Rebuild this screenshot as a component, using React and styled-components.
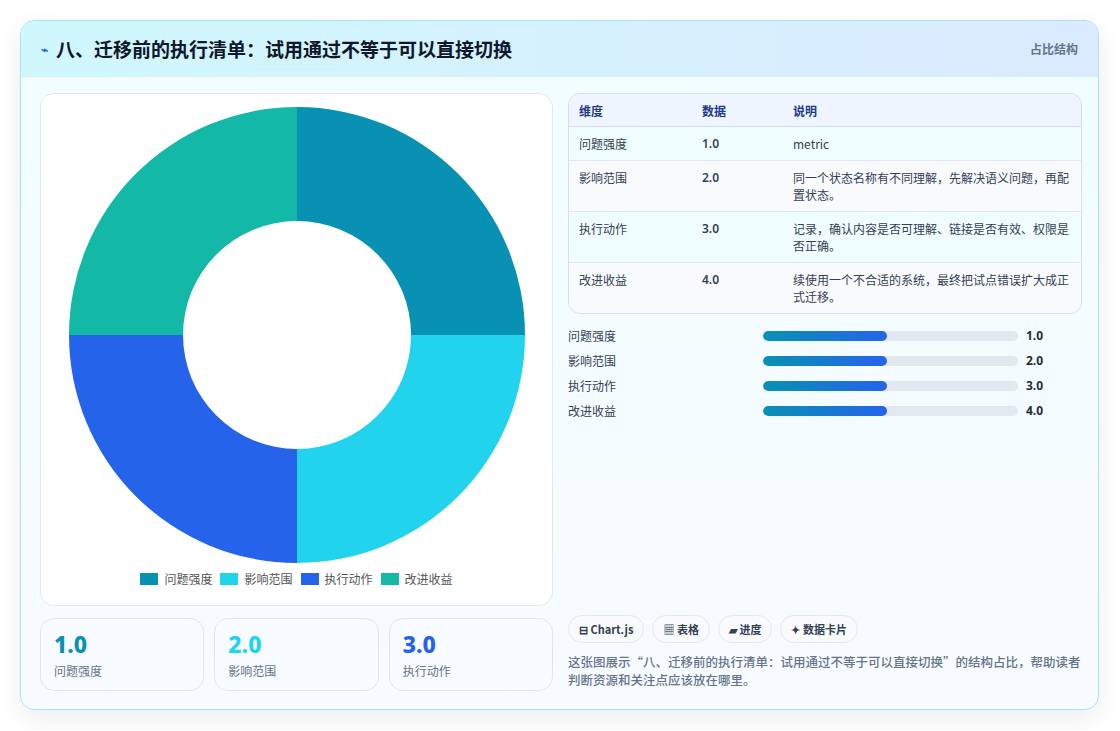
import React from "react";
import styled, { createGlobalStyle } from "styled-components";

const G = createGlobalStyle`
  body{margin:0;background:#fff;font-family:"Noto Sans CJK SC","Noto Sans",sans-serif;}
`;
const Page = styled.div`padding:20px 20px 20px 20px;`;
const Card = styled.div`
  width:1079px;height:690px;box-sizing:border-box;border:1px solid #a5e6f0;border-radius:14px;
  background:linear-gradient(180deg,#f0fdff 0%,#f8fbff 100%);overflow:hidden;
  box-shadow:0 8px 24px rgba(15,23,42,0.08);display:flex;flex-direction:column;
`;
const Header = styled.div`
  height:55px;flex:none;display:flex;align-items:center;justify-content:space-between;padding:0 20px;
  background:linear-gradient(90deg,#cff8fd,#dbeafe);border-bottom:1px solid #d6eef5;
`;
const Title = styled.h1`margin:0;font-size:19px;font-weight:700;color:#0f172a;display:flex;align-items:center;gap:8px;`;
const Tag = styled.span`font-size:12px;color:#64748b;font-weight:600;`;
const Body = styled.div`flex:1;display:grid;grid-template-columns:513px 514px;gap:15px;padding:16px 18px 18px 19px;`;
const Col = styled.div`display:flex;flex-direction:column;gap:12px;min-height:0;`;
const ChartBox = styled.div`
  height:513px;box-sizing:border-box;background:#fff;border:1px solid #e2e8f0;border-radius:14px;
  display:flex;flex-direction:column;align-items:center;padding-top:12px;
`;
const Legend = styled.div`display:flex;gap:8px;margin-top:6px;font-size:12px;color:#555;`;
const LItem = styled.span`display:flex;align-items:center;gap:6px;`;
const Sw = styled.i`width:18px;height:12px;background:${p=>p.c};display:inline-block;`;
const Stats = styled.div`display:grid;grid-template-columns:repeat(3,1fr);gap:10px;`;
const Stat = styled.div`height:73px;box-sizing:border-box;border:1px solid #dbe7f3;border-radius:14px;background:#f8fbff;padding:12px 13px;`;
const SV = styled.div`font-size:23px;font-weight:800;color:${p=>p.c};line-height:27px;font-family:"Noto Sans",sans-serif;`;
const SL = styled.div`font-size:12px;color:#64748b;margin-top:4px;`;
const Table = styled.table`
  width:100%;border-collapse:separate;border-spacing:0;border:1px solid #d5dee9;border-radius:12px;overflow:hidden;font-size:12px;color:#334155;
  th{background:#eef5fe;color:#1e3a8a;font-weight:600;text-align:left;height:32px;padding:0 10px;border-bottom:1px solid #d5dee9;}
  td{padding:8px 10px;vertical-align:top;line-height:17px;border-bottom:1px solid #e2e8f0;}
  tr:nth-child(odd) td{background:#f0fdff;}
  tr:nth-child(even) td{background:#f8fafc;}
  tr:last-child td{border-bottom:none;}
  td:nth-child(2){font-weight:600;font-family:"Noto Sans",sans-serif;}
`;
const Bars = styled.div`display:flex;flex-direction:column;gap:6px;margin-top:2px;`;
const BarRow = styled.div`display:grid;grid-template-columns:187px 255px 1fr;gap:8px;align-items:center;font-size:12px;color:#334155;height:19px;`;
const Track = styled.div`height:10px;border-radius:5px;background:#e2e8f0;overflow:hidden;`;
const Fill = styled.div`height:100%;width:48.5%;border-radius:5px;background:linear-gradient(90deg,#0891b2,#2563eb);`;
const Num = styled.span`font-weight:700;color:#1e293b;font-family:"Noto Sans",sans-serif;`;
const Spacer = styled.div`flex:1;`;
const Pills = styled.div`display:flex;gap:8px;`;
const Pill = styled.span`height:28px;box-sizing:border-box;border:1px solid #e2e8f0;border-radius:14px;padding:0 10px;display:flex;align-items:center;gap:4px;font-size:11px;font-weight:600;color:#334155;background:#f8fafc;`;
const Desc = styled.p`margin:0 0 2px;font-size:12.5px;line-height:18px;color:#64748b;font-weight:500;`;

const data=[["问题强度","1.0","metric","#0891b2"],["影响范围","2.0","同一个状态名称有不同理解，先解决语义问题，再配置状态。","#22d3ee"],["执行动作","3.0","记录，确认内容是否可理解、链接是否有效、权限是否正确。","#2563eb"],["改进收益","4.0","续使用一个不合适的系统，最终把试点错误扩大成正式迁移。","#14b8a6"]];

function Donut(){
  const R=228,r=114,cx=229,cy=229;
  const pt=(a,rad)=>[cx+rad*Math.sin(a),cy-rad*Math.cos(a)];
  return <svg width="458" height="458">{data.map((d,i)=>{const a0=i*Math.PI/2,a1=a0+Math.PI/2;
    const [x0,y0]=pt(a0,R),[x1,y1]=pt(a1,R),[x2,y2]=pt(a1,r),[x3,y3]=pt(a0,r);
    return <path key={i} fill={d[3]} d={`M${x0} ${y0}A${R} ${R} 0 0 1 ${x1} ${y1}L${x2} ${y2}A${r} ${r} 0 0 0 ${x3} ${y3}Z`}/>;})}</svg>;
}

export default function App(){
  return <Page><G/><Card>
    <Header><Title><span style={{color:"#2563eb",fontSize:12}}>⌁</span>八、迁移前的执行清单：试用通过不等于可以直接切换</Title><Tag>占比结构</Tag></Header>
    <Body>
      <Col>
        <ChartBox><Donut/><Legend>{data.map(d=><LItem key={d[0]}><Sw c={d[3]}/>{d[0]}</LItem>)}</Legend></ChartBox>
        <Stats>{data.slice(0,3).map(d=><Stat key={d[0]}><SV c={d[3]}>{d[1]}</SV><SL>{d[0]}</SL></Stat>)}</Stats>
      </Col>
      <Col style={{gap:10}}>
        <Table><thead><tr><th style={{width:103}}>维度</th><th style={{width:71}}>数据</th><th>说明</th></tr></thead>
          <tbody>{data.map(d=><tr key={d[0]}><td>{d[0]}</td><td>{d[1]}</td><td>{d[2]}</td></tr>)}</tbody></Table>
        <Bars>{data.map(d=><BarRow key={d[0]}><span>{d[0]}</span><Track><Fill/></Track><Num>{d[1]}</Num></BarRow>)}</Bars>
        <Spacer/>
        <Pills><Pill>⊟ Chart.js</Pill><Pill>▦ 表格</Pill><Pill>▰ 进度</Pill><Pill>✦ 数据卡片</Pill></Pills>
        <Desc>这张图展示“八、迁移前的执行清单：试用通过不等于可以直接切换”的结构占比，帮助读者判断资源和关注点应该放在哪里。</Desc>
      </Col>
    </Body>
  </Card></Page>;
}
